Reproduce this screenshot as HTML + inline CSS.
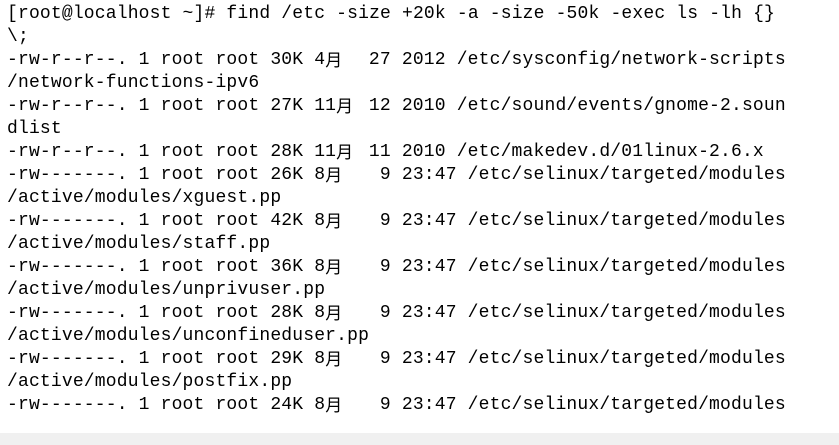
<!DOCTYPE html>
<html><head><meta charset="utf-8"><style>
html,body{margin:0;padding:0;background:#fff;width:839px;height:445px;overflow:hidden}
pre{margin:0;position:absolute;left:7px;top:3px;font-family:"Liberation Mono","Noto Sans CJK SC",monospace;font-size:18px;line-height:23px;letter-spacing:0.17px;color:#000;white-space:pre}
.c{display:inline-block;width:21.8px;height:23px;line-height:19px;vertical-align:top;overflow:hidden;font-family:"Noto Sans CJK SC",sans-serif;font-size:17px;letter-spacing:0}
.bar{position:absolute;left:0;top:433px;width:839px;height:12px;background:#f0f0f0}
</style></head><body>
<pre>[root@localhost ~]# find /etc -size +20k -a -size -50k -exec ls -lh {}
\;
-rw-r--r--. 1 root root 30K 4<span class="c">月</span>  27 2012 /etc/sysconfig/network-scripts
/network-functions-ipv6
-rw-r--r--. 1 root root 27K 11<span class="c">月</span> 12 2010 /etc/sound/events/gnome-2.soun
dlist
-rw-r--r--. 1 root root 28K 11<span class="c">月</span> 11 2010 /etc/makedev.d/01linux-2.6.x
-rw-------. 1 root root 26K 8<span class="c">月</span>   9 23:47 /etc/selinux/targeted/modules
/active/modules/xguest.pp
-rw-------. 1 root root 42K 8<span class="c">月</span>   9 23:47 /etc/selinux/targeted/modules
/active/modules/staff.pp
-rw-------. 1 root root 36K 8<span class="c">月</span>   9 23:47 /etc/selinux/targeted/modules
/active/modules/unprivuser.pp
-rw-------. 1 root root 28K 8<span class="c">月</span>   9 23:47 /etc/selinux/targeted/modules
/active/modules/unconfineduser.pp
-rw-------. 1 root root 29K 8<span class="c">月</span>   9 23:47 /etc/selinux/targeted/modules
/active/modules/postfix.pp
-rw-------. 1 root root 24K 8<span class="c">月</span>   9 23:47 /etc/selinux/targeted/modules</pre>
<div class="bar"></div>
</body></html>
